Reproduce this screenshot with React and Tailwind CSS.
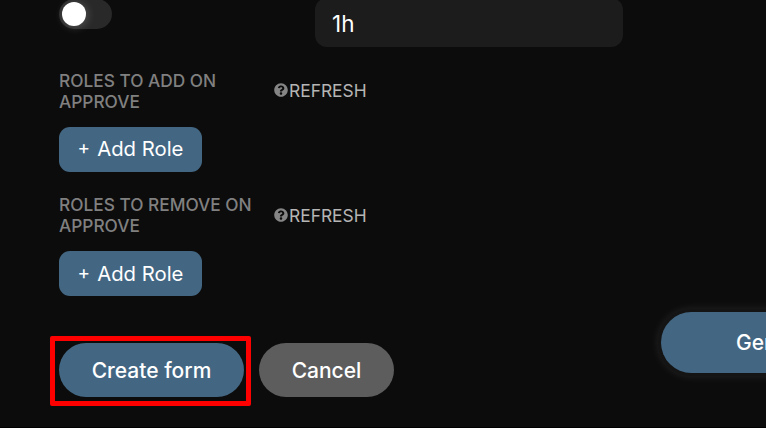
function HelpIcon() {
  return (
    <svg viewBox="0 0 512 512" className="size-[14px] shrink-0 fill-[#858585]" aria-hidden="true">
      <path d="M504 256c0 137-111 248-248 248S8 393 8 256 119 8 256 8s248 111 248 248zM262.700 90c-54.500 0-89.300 23-116.500 63.800-3.500 5.300-2.400 12.400 2.700 16.300l34.700 26.300c5.200 3.900 12.600 3 16.700-2.100 17.900-22.700 30.100-35.800 57.300-35.800 20.400 0 45.700 13.100 45.700 33 0 15-12.400 22.700-32.500 34C247.100 238.500 216 254.900 216 296v4c0 6.600 5.400 12 12 12h56c6.600 0 12-5.400 12-12v-1.300c0-28.500 83.200-29.600 83.200-106.700 0-58-60.200-102-116.500-102zM256 338c-25.400 0-46 20.600-46 46s20.600 46 46 46 46-20.600 46-46-20.600-46-46-46z" />
    </svg>
  );
}

function RoleSection({ lines, className, helpClassName, buttonClassName }) {
  return (
    <section className={className}>
      <div className="flex h-[42px] items-center leading-[21px]">
        <div className="w-[214.5px] whitespace-nowrap text-[17.3px] font-medium text-[#808080]">
          {lines.map((line) => (
            <div key={line}>{line}</div>
          ))}
        </div>
        <div className={helpClassName}>
          <HelpIcon />
          <button className="ml-[1.5px] text-[17.4px] text-[#b5b5b5]">REFRESH</button>
        </div>
      </div>
      <button
        className={`mt-[15px] flex h-[45px] w-[143px] items-center justify-center gap-[7px] rounded-[11px] bg-[#436783] text-[20.3px] leading-[23px] text-white ${buttonClassName}`}
      >
        <span className="-mt-[2px] text-[19px]">+</span>
        <span>Add Role</span>
      </button>
    </section>
  );
}

export default function App() {
  return (
    <div className="flex h-[428px] w-[766px] overflow-hidden border-b border-black bg-[#0c0c0c] font-['Inter',sans-serif]">
      <main className="flex w-[661px] shrink-0 flex-col pl-[59px]">
        <div className="-mt-[2px] flex h-[49px] shrink-0">
          <div className="mt-px flex h-[30px] w-[53px] items-center rounded-full bg-[#292929] pl-[3px]">
            <div className="size-6 rounded-full bg-white shadow-[1px_1px_10px_rgba(255,255,255,0.22)]" />
          </div>
          <div className="ml-[203px] flex w-[308px] items-center rounded-[12px] bg-[#1c1c1c] pt-[2px] pl-[17px] text-[22.5px] text-white">
            1h
          </div>
        </div>
        <RoleSection
          className="mt-[23px]"
          helpClassName="flex items-center pb-[2px]"
          buttonClassName="pb-[2px]"
          lines={["ROLES TO ADD ON", "APPROVE"]}
        />
        <RoleSection
          className="mt-[22px]"
          helpClassName="flex items-center"
          buttonClassName="pb-0"
          lines={["ROLES TO REMOVE ON", "APPROVE"]}
        />
        <div className="-ml-[9px] mt-[40px] flex items-start gap-2 text-[21px] leading-[24px] font-medium text-white">
          <div className="rounded-[2px] border-[5px] border-[#ff0000] pt-[2px] pr-[2px] pb-1 pl-1">
            <button className="flex h-[54px] w-[185px] items-center justify-center rounded-full bg-[#436783] pt-px">
              Create form
            </button>
          </div>
          <button className="mt-[7px] flex h-[54px] w-[135px] items-center justify-center rounded-full bg-[#5d5d5d] pt-px">
            Cancel
          </button>
        </div>
      </main>
      <button className="mt-[312px] flex h-[61px] w-[240px] shrink-0 items-center rounded-full bg-[#436783] pl-[75px] text-[21px] font-medium text-white shadow-[0_0_0_3px_#141414,0_0_10px_3px_rgba(255,255,255,0.10)]">
        Generate
      </button>
    </div>
  );
}
